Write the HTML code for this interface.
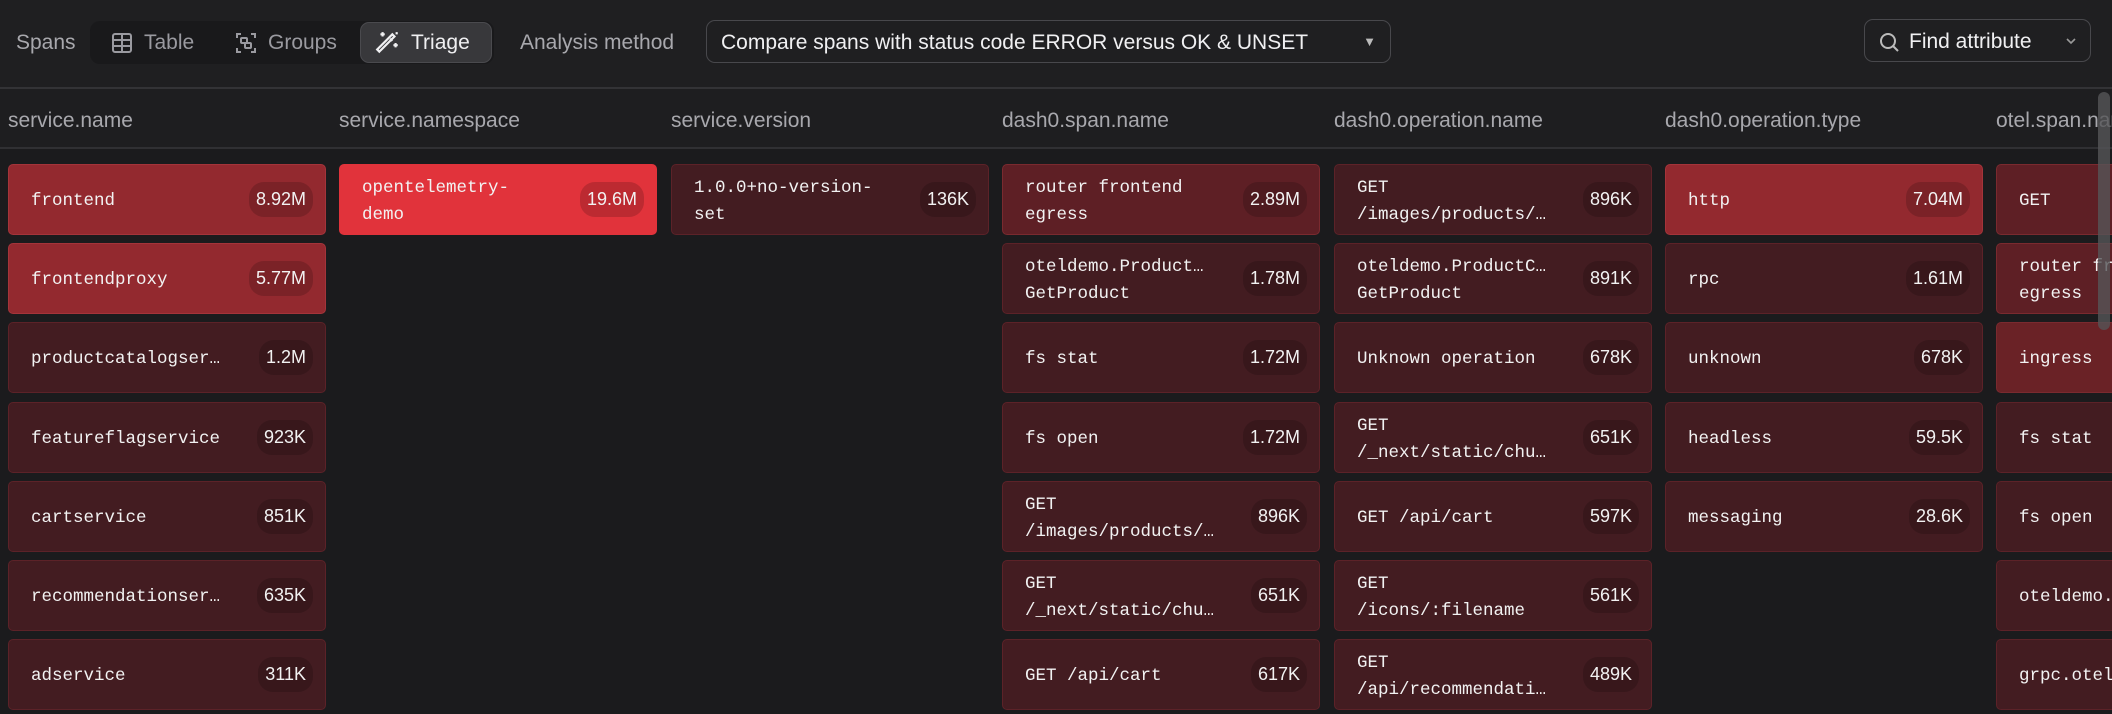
<!DOCTYPE html>
<html><head><meta charset="utf-8"><style>
*{box-sizing:border-box;margin:0;padding:0}
html,body{width:2112px;height:714px;overflow:hidden}
body{background:#1b1b1d;font-family:"Liberation Sans",sans-serif;color:#e8e8ea;position:relative}
.wrap{position:absolute;left:0;top:0;width:2112px;height:714px;overflow:hidden}
.top{position:absolute;left:0;top:0;width:2112px;height:89px;background:#1f1f21;border-bottom:2px solid #333336}
.t{position:absolute;font-size:21px;color:#a8a8ad;top:31px}
.seg{position:absolute;left:90px;top:21px;width:404px;height:43px;background:#19191b;border-radius:10px}
.btn{position:absolute;top:22px;height:41px;display:flex;align-items:center;gap:10px;font-size:21px;color:#9a9aa0}
.tri{left:360px;width:132px;background:#38383b;border:1px solid #4a4a4e;border-radius:9px;color:#f0f0f2;padding-left:14px}
.dd{position:absolute;left:706px;top:20px;width:685px;height:43px;border:1.5px solid #48484c;border-radius:9px;font-size:21px;color:#f0f0f2;padding:10px 14px}
.fa{position:absolute;left:1864px;top:19px;width:227px;height:43px;border:1.5px solid #48484c;border-radius:9px;font-size:21px;color:#f0f0f2;padding:10px 0 0 44px}
.hdr{position:absolute;top:89px;left:0;width:2112px;height:60px;border-bottom:2px solid #303033;background:#1e1e20}
.hdr span{position:absolute;top:20px;font-size:21px;color:#a8a8ad;white-space:nowrap}
.c{position:absolute;width:318px;height:71px;border-radius:5px;border:1.5px solid #5c2228;background:#431c21;display:flex;align-items:center;padding:4px 12px 0 22px;font-family:"Liberation Mono",monospace;font-size:17.5px;line-height:27px;color:#f2f2f2;overflow:hidden}
.c .n{flex:1;white-space:pre;overflow:hidden}
.e{width:116px;border-right:none;border-radius:5px 0 0 5px}
.e .n{overflow:visible}
.c b{font-family:"Liberation Sans",sans-serif;font-weight:normal;font-size:18px;background:rgba(0,0,0,.16);border-radius:15px;padding:4px 7px;margin-top:-4px}
.l2{background:#5e1f25;border-color:#7a2a2f}
.l3{background:#93292f;border-color:#a4343a}
.l4{background:#e1333b;border-color:#e1333b}
.sb{position:absolute;left:2098px;top:92px;width:12px;height:238px;background:#555558;border-radius:6px;opacity:.8}
</style></head><body><div class="wrap">
<div class="top">
<div class="t" style="left:16px">Spans</div>
<div class="seg"></div>
<div class="btn" style="left:110px"><svg width="24" height="24" viewBox="0 0 24 24" fill="none" stroke="#9a9aa0" stroke-width="2"><rect x="3" y="3" width="18" height="18" rx="2"/><path d="M3 9h18M3 15h18M12 3v18"/></svg>Table</div>
<div class="btn" style="left:234px"><svg width="24" height="24" viewBox="0 0 24 24" fill="none" stroke="#9a9aa0" stroke-width="2"><path d="M3 7V3h4M17 3h4v4M21 17v4h-4M7 21H3v-4"/><rect x="7" y="7" width="6" height="5" rx="1"/><rect x="11" y="12" width="6" height="5" rx="1"/></svg>Groups</div>
<div class="btn tri"><svg width="26" height="26" viewBox="0 0 24 24" fill="none" stroke="#f0f0f2" stroke-width="2"><path d="M4 20L18 6l-2-2L2 18z"/><path d="M14 8l2 2M7 2v4M5 4h4M19 12v4M17 14h4M20 2v2M19 3h2"/></svg>Triage</div>
<div class="t" style="left:520px">Analysis method</div>
<div class="dd">Compare spans with status code ERROR versus OK &amp; UNSET<span style="position:absolute;right:14px;top:13px;font-size:13px;color:#bbb">▼</span></div>
<div class="fa"><svg style="position:absolute;left:12px;top:10px" width="24" height="24" viewBox="0 0 24 24" fill="none" stroke="#bbb" stroke-width="2"><circle cx="11" cy="11" r="7"/><path d="M16 16l5 5"/></svg>Find attribute<svg style="position:absolute;right:12px;top:16px" width="14" height="10" viewBox="0 0 14 10" fill="none" stroke="#999" stroke-width="1.6"><path d="M3 3l4 4 4-4"/></svg></div>
</div>
<div class="hdr">
<span style="left:8px">service.name</span><span style="left:339px">service.namespace</span><span style="left:671px">service.version</span><span style="left:1002px">dash0.span.name</span><span style="left:1334px">dash0.operation.name</span><span style="left:1665px">dash0.operation.type</span><span style="left:1996px">otel.span.name</span>
</div>

<div class="c l3" style="left:8px;top:164px"><span class="n">frontend</span><b>8.92M</b></div>
<div class="c l3" style="left:8px;top:243px"><span class="n">frontendproxy</span><b>5.77M</b></div>
<div class="c" style="left:8px;top:322px"><span class="n">productcatalogser…</span><b>1.2M</b></div>
<div class="c" style="left:8px;top:402px"><span class="n">featureflagservice</span><b>923K</b></div>
<div class="c" style="left:8px;top:481px"><span class="n">cartservice</span><b>851K</b></div>
<div class="c" style="left:8px;top:560px"><span class="n">recommendationser…</span><b>635K</b></div>
<div class="c" style="left:8px;top:639px"><span class="n">adservice</span><b>311K</b></div>

<div class="c l4" style="left:339px;top:164px"><span class="n">opentelemetry-
demo</span><b>19.6M</b></div>

<div class="c" style="left:671px;top:164px"><span class="n">1.0.0+no-version-
set</span><b>136K</b></div>

<div class="c l2" style="left:1002px;top:164px"><span class="n">router frontend
egress</span><b>2.89M</b></div>
<div class="c" style="left:1002px;top:243px"><span class="n">oteldemo.Product…
GetProduct</span><b>1.78M</b></div>
<div class="c" style="left:1002px;top:322px"><span class="n">fs stat</span><b>1.72M</b></div>
<div class="c" style="left:1002px;top:402px"><span class="n">fs open</span><b>1.72M</b></div>
<div class="c" style="left:1002px;top:481px"><span class="n">GET
/images/products/…</span><b>896K</b></div>
<div class="c" style="left:1002px;top:560px"><span class="n">GET
/_next/static/chu…</span><b>651K</b></div>
<div class="c" style="left:1002px;top:639px"><span class="n">GET /api/cart</span><b>617K</b></div>

<div class="c" style="left:1334px;top:164px"><span class="n">GET
/images/products/…</span><b>896K</b></div>
<div class="c" style="left:1334px;top:243px"><span class="n">oteldemo.ProductC…
GetProduct</span><b>891K</b></div>
<div class="c" style="left:1334px;top:322px"><span class="n">Unknown operation</span><b>678K</b></div>
<div class="c" style="left:1334px;top:402px"><span class="n">GET
/_next/static/chu…</span><b>651K</b></div>
<div class="c" style="left:1334px;top:481px"><span class="n">GET /api/cart</span><b>597K</b></div>
<div class="c" style="left:1334px;top:560px"><span class="n">GET
/icons/:filename</span><b>561K</b></div>
<div class="c" style="left:1334px;top:639px"><span class="n">GET
/api/recommendati…</span><b>489K</b></div>

<div class="c l3" style="left:1665px;top:164px"><span class="n">http</span><b>7.04M</b></div>
<div class="c" style="left:1665px;top:243px"><span class="n">rpc</span><b>1.61M</b></div>
<div class="c" style="left:1665px;top:322px"><span class="n">unknown</span><b>678K</b></div>
<div class="c" style="left:1665px;top:402px"><span class="n">headless</span><b>59.5K</b></div>
<div class="c" style="left:1665px;top:481px"><span class="n">messaging</span><b>28.6K</b></div>

<div class="c e l2" style="left:1996px;top:164px"><span class="n">GET</span></div>
<div class="c e l2" style="left:1996px;top:243px"><span class="n">router fr
egress</span></div>
<div class="c e l2" style="left:1996px;top:322px;background:#6a2226"><span class="n">ingress</span></div>
<div class="c e" style="left:1996px;top:402px"><span class="n">fs stat</span></div>
<div class="c e" style="left:1996px;top:481px"><span class="n">fs open</span></div>
<div class="c e" style="left:1996px;top:560px"><span class="n">oteldemo.</span></div>
<div class="c e" style="left:1996px;top:639px"><span class="n">grpc.otel</span></div>
<div class="sb"></div>
</div></body></html>
